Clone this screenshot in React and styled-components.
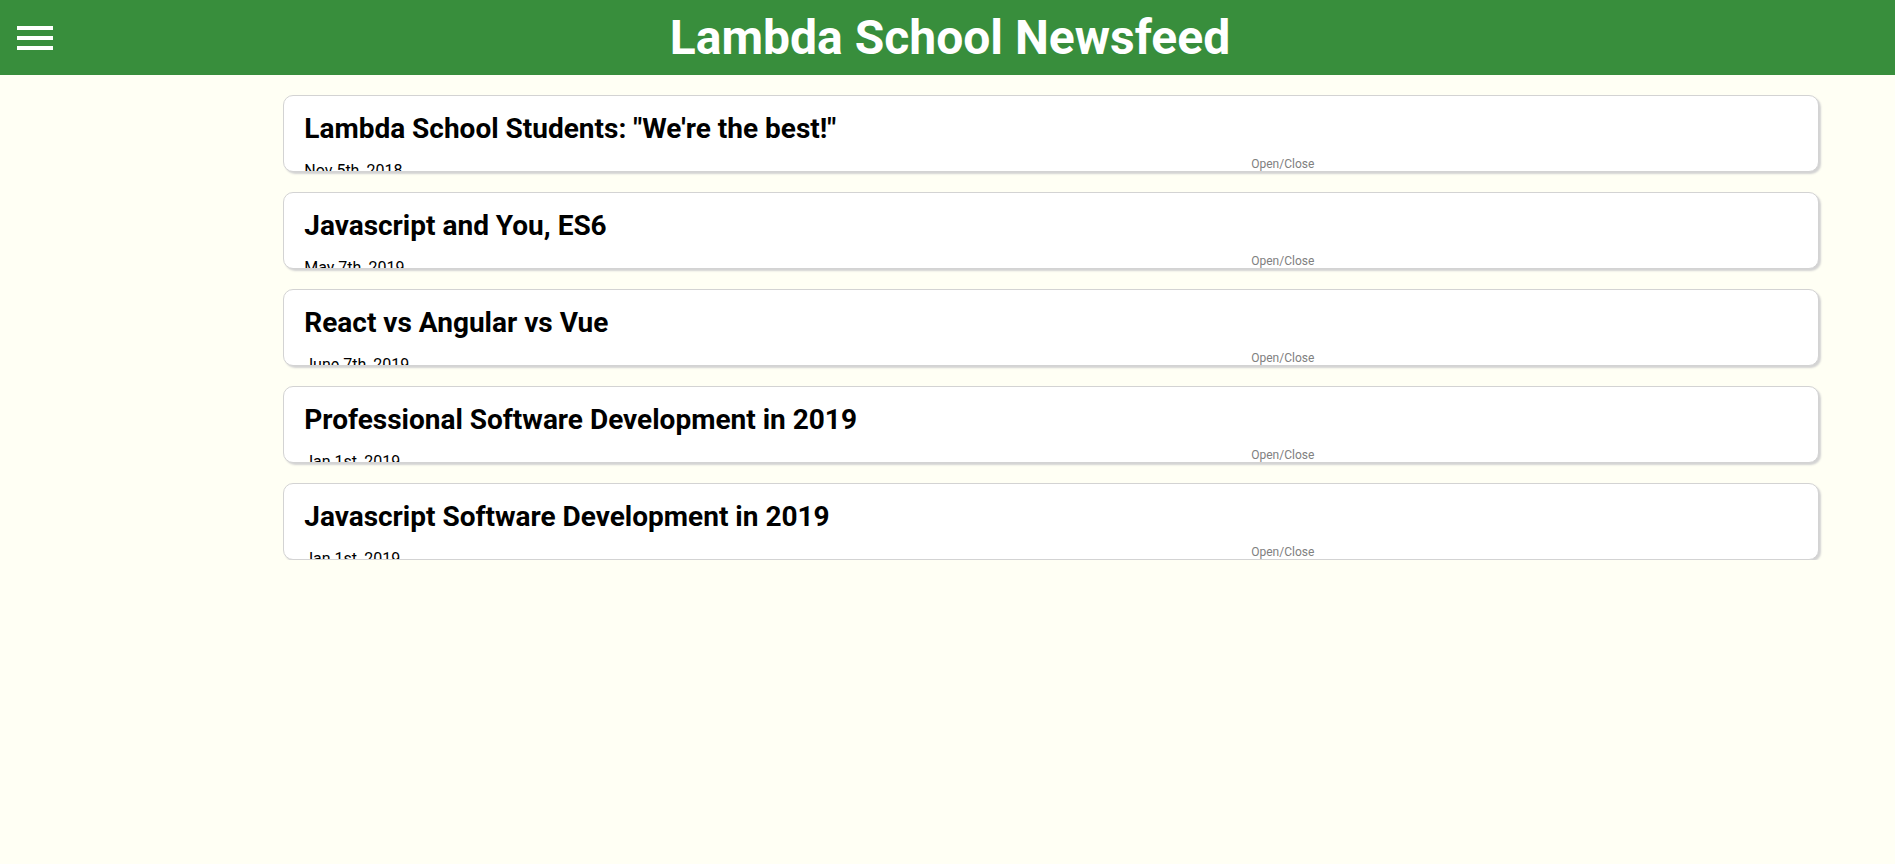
import React from "react";
import styled, { createGlobalStyle } from "styled-components";

const GlobalStyle = createGlobalStyle`
  html, body {
    margin: 0;
    padding: 0;
    background: #fffff4;
    font-family: Roboto, "Liberation Sans", sans-serif;
  }
`;

const Header = styled.header`
  height: 75px;
  background: #388e3c;
  display: flex;
  align-items: center;
  justify-content: center;
  position: relative;
`;

const MenuButton = styled.div`
  position: absolute;
  left: 17px;
  top: 26px;
  display: flex;
  flex-direction: column;
  gap: 6px;

  span {
    display: block;
    width: 36px;
    height: 4px;
    background: #fff;
  }
`;

const Title = styled.h1`
  margin: 0;
  padding-left: 5px;
  color: #fff;
  font-size: 48px;
  font-weight: 700;
`;

const Articles = styled.div`
  padding-top: 20px;
  display: flex;
  flex-direction: column;
  gap: 20px;
`;

const Article = styled.div`
  box-sizing: border-box;
  margin: 0 4% 0 calc(15% - 1px);
  height: 77px;
  padding: 0 20px;
  background: #fff;
  border: 1px solid lightgrey;
  border-radius: 10px;
  box-shadow: 2px 2px 2px lightgrey;
  overflow: hidden;
  position: relative;

  h2 {
    margin: 16px 0 16px;
    font-size: 28px;
    font-weight: 700;
    color: #000;
  }
`;

const Date = styled.p`
  margin: 0;
  font-size: 16px;
  color: #000;
`;

const Expand = styled.span`
  position: absolute;
  bottom: 0;
  left: 967px;
  font-size: 12px;
  color: grey;
  cursor: pointer;
`;

const data = [
  { title: 'Lambda School Students: "We\'re the best!"', date: "Nov 5th, 2018" },
  { title: "Javascript and You, ES6", date: "May 7th, 2019" },
  { title: "React vs Angular vs Vue", date: "June 7th, 2019" },
  { title: "Professional Software Development in 2019", date: "Jan 1st, 2019" },
  { title: "Javascript Software Development in 2019", date: "Jan 1st, 2019" },
];

const App = () => {
  return (
    <>
      <GlobalStyle />
      <Header>
        <MenuButton>
          <span />
          <span />
          <span />
        </MenuButton>
        <Title>Lambda School Newsfeed</Title>
      </Header>
      <Articles>
        {data.map((a) => (
          <Article key={a.title}>
            <h2>{a.title}</h2>
            <Date>{a.date}</Date>
            <Expand>Open/Close</Expand>
          </Article>
        ))}
      </Articles>
    </>
  );
};

export default App;
